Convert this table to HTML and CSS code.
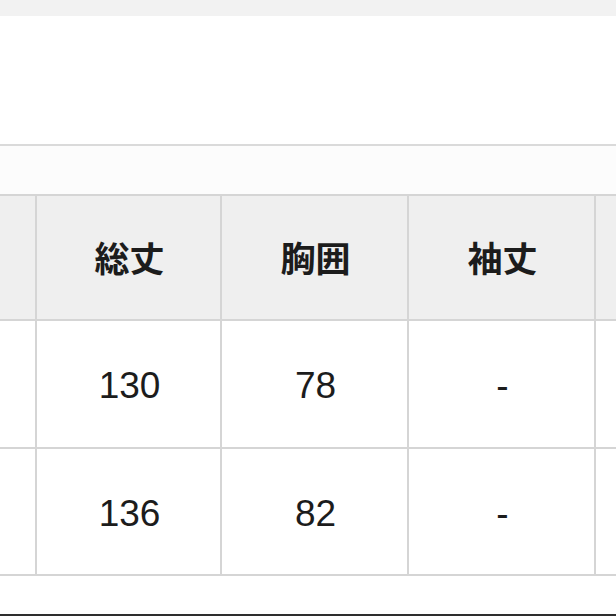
FILE: index.html
```html
<!DOCTYPE html>
<html lang="ja">
<head>
<meta charset="utf-8">
<link rel="stylesheet" href="styles.css">
</head>
<body>
<div class="page">
  <div class="topband"></div>
  <div class="blank"></div>
  <div class="sep"></div>
  <div class="caption"></div>
  <div class="table">
    <div class="cell head"></div>
    <div class="cell head">総丈</div>
    <div class="cell head">胸囲</div>
    <div class="cell head">袖丈</div>
    <div class="cell head"></div>

    <div class="cell"></div>
    <div class="cell">130</div>
    <div class="cell">78</div>
    <div class="cell">-</div>
    <div class="cell"></div>

    <div class="cell"></div>
    <div class="cell">136</div>
    <div class="cell">82</div>
    <div class="cell">-</div>
    <div class="cell"></div>
  </div>
  <div class="after"></div>
  <div class="bottomline"></div>
</div>
</body>
</html>
```

FILE: styles.css
```css
html, body {
  margin: 0;
  padding: 0;
  background: #ffffff;
}
.page {
  width: 616px;
  height: 616px;
  overflow: hidden;
  display: flex;
  flex-direction: column;
  font-family: "Liberation Sans", "Noto Sans CJK JP", sans-serif;
  color: #1c1c1c;
}
.topband {
  height: 16px;
  background: #f2f2f2;
  flex: none;
}
.blank {
  height: 128px;
  background: #ffffff;
  flex: none;
}
.sep {
  height: 2px;
  background: #dadada;
  flex: none;
}
.caption {
  height: 48px;
  background: #fcfcfc;
  flex: none;
}
.table {
  flex: none;
  display: grid;
  grid-template-columns: 35px 183px 185px 185px 1fr;
  grid-template-rows: 123px 126px 125px;
  gap: 2px;
  padding: 2px 0;
  background: #d5d5d5;
}
.cell {
  background: #ffffff;
  display: flex;
  align-items: center;
  justify-content: center;
  font-size: 37px;
  line-height: 1;
  padding-top: 3px;
  padding-left: 2px;
}
.cell.head {
  background: #efefef;
  font-family: "Noto Sans CJK JP", sans-serif;
  font-weight: 700;
  font-size: 35px;
  padding-top: 0;
  padding-bottom: 3px;
}
.after {
  height: 38px;
  background: #ffffff;
  flex: none;
}
.bottomline {
  height: 2px;
  background: #2e2e2e;
  flex: none;
}
```
